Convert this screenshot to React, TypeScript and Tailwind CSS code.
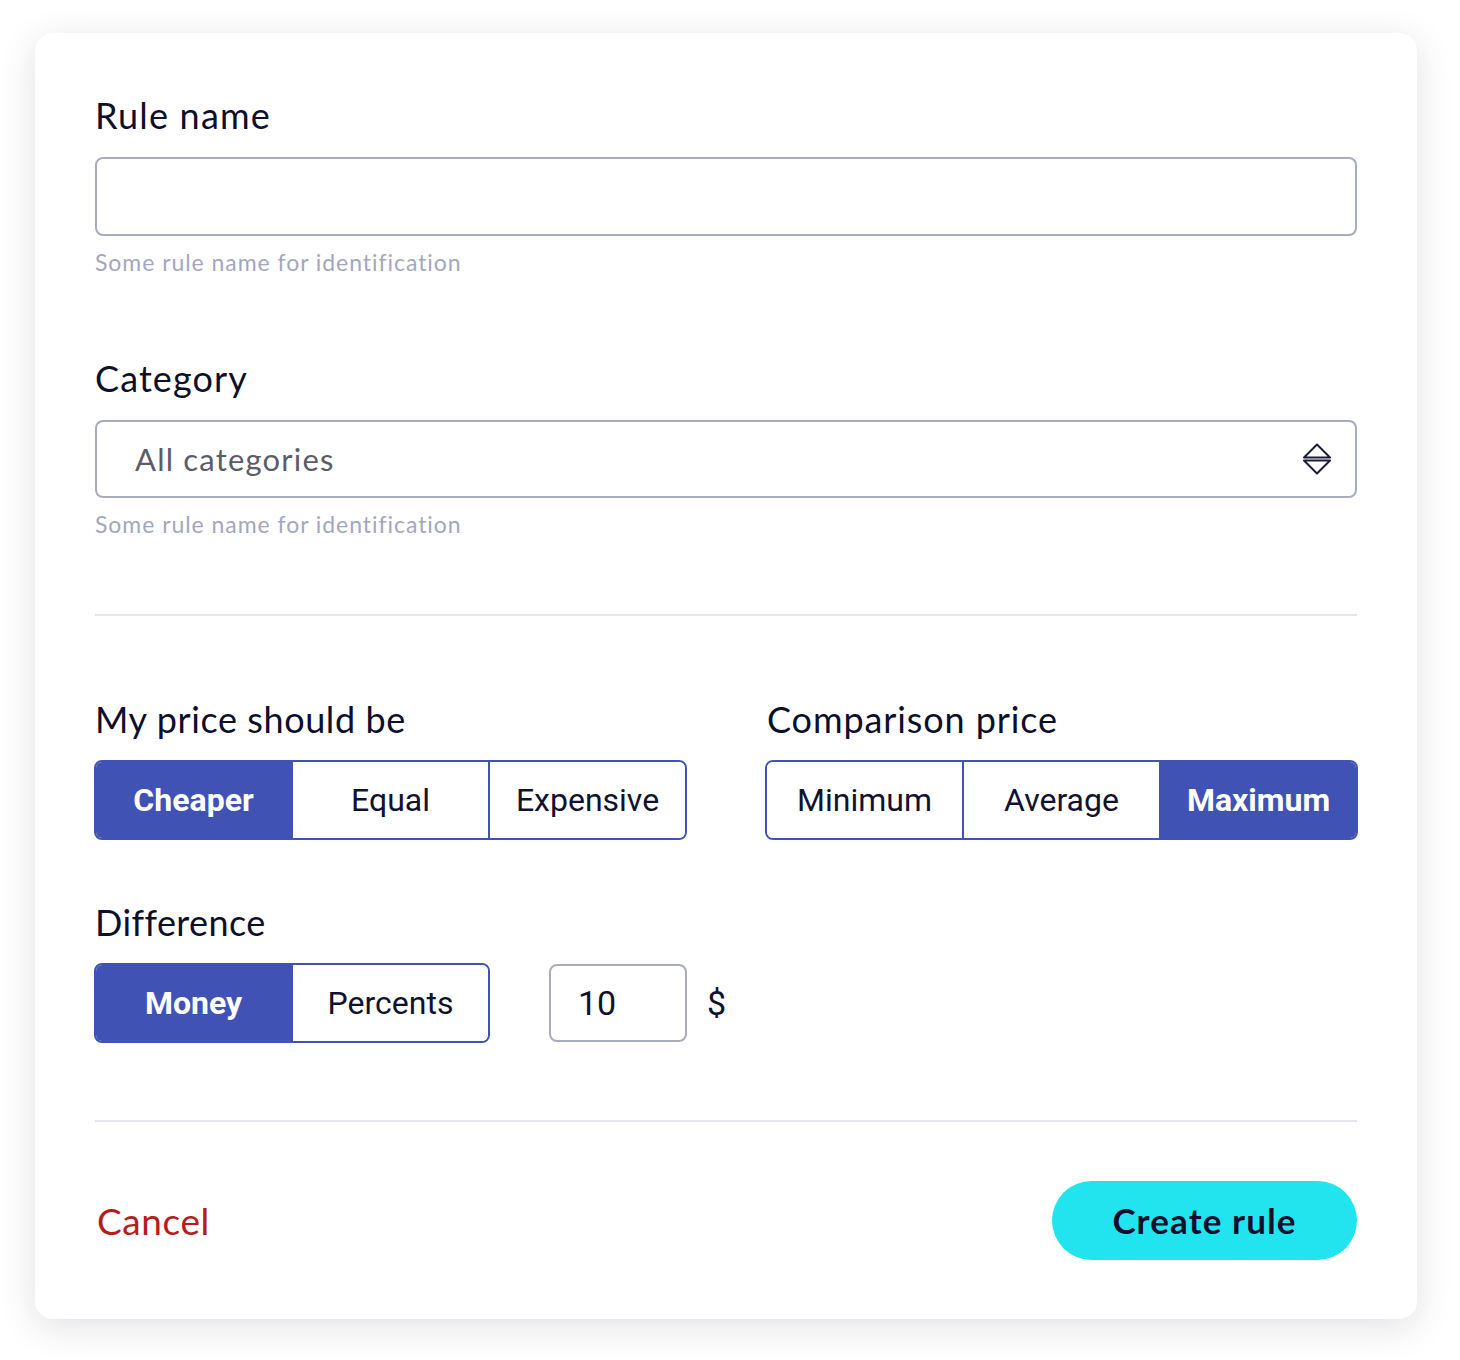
import React from "react";

const mul = { fontFamily: "Lato, 'Noto Sans', sans-serif" };
const rob = { fontFamily: "Roboto, 'Noto Sans', sans-serif" };

function Seg({ items, active, className }: { items: string[]; active: number; className?: string }) {
  return (
    <div className={"flex h-[80px] rounded-[8px] border-2 border-[#4152b5] overflow-hidden " + (className || "")} style={rob}>
      {items.map((t, i) => (
        <div
          key={t}
          className={
            "flex-1 flex items-center justify-center text-[32px] " +
            (i > 0 ? "border-l-2 border-[#4152b5] " : "") +
            (i === active ? "bg-[#4152b5] text-white font-bold" : "bg-white text-[#10122e]")
          }
        >
          {t}
        </div>
      ))}
    </div>
  );
}

export default function App() {
  return (
    <div className="min-h-[1360px] w-[1460px] bg-white pt-[33px] pl-[35px]">
      <div className="w-[1382px] h-[1286px] bg-white rounded-[18px] shadow-[0_8px_36px_rgba(20,20,50,0.13)] px-[60px] pt-[62px] text-[#0d0f2c]">
        <div className="h-[40px] leading-[40px] text-[36px] tracking-[1.2px]" style={mul}>Rule name</div>
        <div className="mt-[22px] h-[79px] rounded-[8px] border-2 border-[#a9acbf] bg-white" />
        <div className="mt-[11px] h-[30px] leading-[30px] text-[23px] tracking-[0.95px] text-[#a4a7bb]" style={mul}>Some rule name for identification</div>

        <div className="mt-[81px] h-[40px] leading-[40px] text-[36px] tracking-[1.1px]" style={mul}>Category</div>
        <div className="mt-[22px] h-[78px] rounded-[8px] border-2 border-[#a9acbf] bg-white flex items-center justify-between pl-[38px] pr-[22px]">
          <span className="text-[31px] tracking-[1.2px] text-[#5b5c68]" style={mul}>All categories</span>
          <svg width="32" height="34" viewBox="0 0 32 34" fill="none" stroke="#1c1d3a" strokeWidth="2" strokeLinejoin="round">
            <path d="M3 15.5 L16 2.5 L29 15.5 Z" />
            <path d="M3 18.5 L29 18.5 L16 31.5 Z" />
          </svg>
        </div>
        <div className="mt-[11px] h-[30px] leading-[30px] text-[23px] tracking-[0.95px] text-[#a4a7bb]" style={mul}>Some rule name for identification</div>

        <div className="mt-[75px] h-[2px] bg-[#e4e4ea]" />

        <div className="mt-[83px] grid grid-cols-2 gap-x-[78px] -mx-[1px]">
          <div>
            <div className="h-[40px] leading-[40px] text-[36px] tracking-[0.6px] pl-[1px]" style={mul}>My price should be</div>
            <Seg className="mt-[21px]" items={["Cheaper", "Equal", "Expensive"]} active={0} />
          </div>
          <div>
            <div className="h-[40px] leading-[40px] text-[36px] tracking-[0.9px] pl-[2px]" style={mul}>Comparison price</div>
            <Seg className="mt-[21px]" items={["Minimum", "Average", "Maximum"]} active={2} />
          </div>
        </div>

        <div className="mt-[62px] h-[40px] leading-[40px] text-[36px] tracking-[0.4px]" style={mul}>Difference</div>
        <div className="mt-[21px] flex items-center -ml-[1px]">
          <Seg className="w-[396px]" items={["Money", "Percents"]} active={0} />
          <div className="ml-[59px] w-[138px] h-[78px] rounded-[8px] border-2 border-[#a9acbf] flex items-center pl-[27px] text-[34px] text-[#10122e]" style={rob}>10</div>
          <div className="ml-[20px] text-[34px] text-[#10122e]" style={rob}>$</div>
        </div>

        <div className="mt-[77px] h-[2px] bg-[#e4e4ea]" />

        <div className="mt-[59px] flex items-center justify-between">
          <span className="text-[37px] tracking-[0.6px] text-[#b71c1c] pl-[2px]" style={mul}>Cancel</span>
          <div className="w-[305px] h-[79px] rounded-full bg-[#22e4ee] flex items-center justify-center text-[35px] tracking-[1.1px] font-bold text-[#0d0f2c]" style={mul}>
            Create rule
          </div>
        </div>
      </div>
    </div>
  );
}
